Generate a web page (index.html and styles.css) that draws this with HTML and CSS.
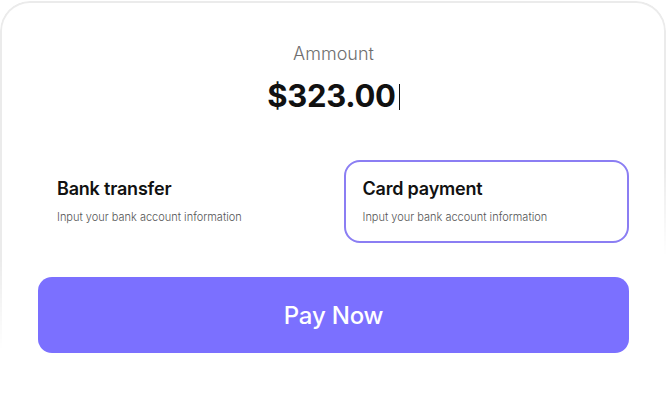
FILE: index.html
```html
<!DOCTYPE html>
<html lang="en">
<head>
  <meta charset="UTF-8"/>
  <meta name="viewport" content="width=device-width, initial-scale=1.0"/>
  <title>Payment</title>
  <link rel="stylesheet" href="styles.css">
</head>
<body>
  <div class="card">
    <div class="amount">
      <div class="amount-label">Ammount</div>
      <div class="amount-value">$323.00<span class="caret"></span></div>
    </div>
    <div class="methods">
      <div class="method">
        <div class="method-title">Bank transfer</div>
        <div class="method-desc">Input your bank account information</div>
      </div>
      <div class="method active">
        <div class="method-title">Card payment</div>
        <div class="method-desc">Input your bank account information</div>
      </div>
    </div>
    <button class="pay">Pay Now</button>
  </div>
</body>
</html>
```

FILE: styles.css
```css
body { margin: 0; background: #fff; font-family: Inter, "Noto Sans", sans-serif; color: #111; overflow: hidden; }
.card { position: relative; width: 591px; height: 364px; margin: 1px 0 0 0; padding: 41px 38px 0 38px; }
.card::before { content: ""; position: absolute; inset: 0 1px 0 0; border: 2px solid #ebebeb; border-bottom: none; border-radius: 30px 30px 0 0; pointer-events: none;
  -webkit-mask-image: linear-gradient(172deg, #000 52%, transparent 70%); mask-image: linear-gradient(172deg, #000 52%, transparent 70%); }
.amount { text-align: center; }
.amount-label { font-size: 18px; line-height: 24px; font-weight: 300; color: #6f6f6f; }
.amount-value { margin-top: 10px; font-size: 31px; line-height: 40px; font-weight: 700; letter-spacing: -0.3px; }
.caret { display: inline-block; width: 1px; height: 26px; background: #111; margin-left: 3px; vertical-align: -3px; }
.methods { display: grid; grid-template-columns: 1fr 1fr; gap: 20px; margin-top: 44px; }
.method { border: 2px solid transparent; border-radius: 16px; padding: 15px 17px 16px; }
.method.active { border-color: #8b7ef3; }
.method-title { font-size: 18px; line-height: 24px; font-weight: 600; letter-spacing: -0.2px; }
.method-desc { margin-top: 8px; font-size: 11px; line-height: 16px; font-weight: 300; color: #555; }
.pay { display: block; width: 100%; height: 76px; margin-top: 34px; border: none; border-radius: 14px; background: #7b70ff; color: #fff;
  font-family: inherit; font-size: 24px; font-weight: 500; letter-spacing: -0.2px; cursor: pointer; }
```
